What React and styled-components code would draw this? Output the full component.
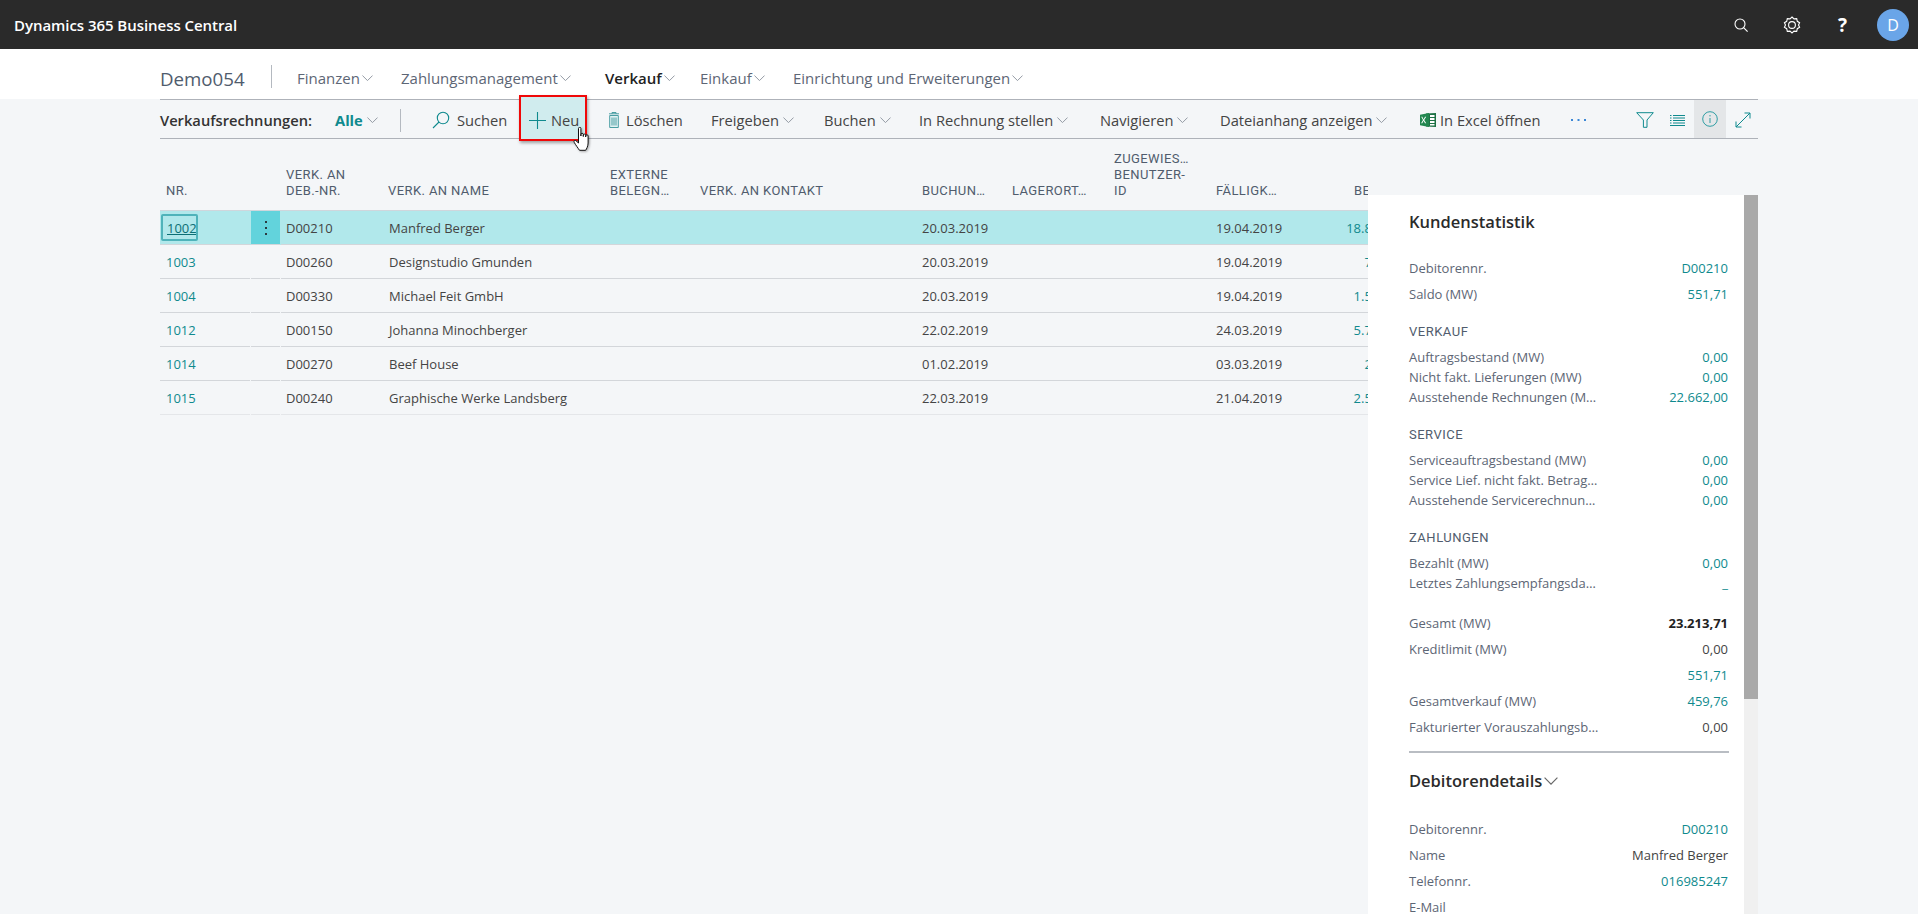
import React from 'react';
import styled, { createGlobalStyle } from 'styled-components';

const Global = createGlobalStyle`
  html, body { margin: 0; padding: 0; height: 914px; overflow: hidden; background: #f4f6f8; }
  * { box-sizing: border-box; }
  body { font-family: "Open Sans", "Noto Sans", "Liberation Sans", sans-serif; color: #333; }
`;

const TEAL = '#0f8a8e';
const Page = styled.div`position: relative; width: 1918px; height: 914px; overflow: hidden;`;

const TopBar = styled.header`
  height: 49px; background: #2a2a2a; display: flex; align-items: center; justify-content: space-between;
  padding: 0 9px 0 14px; color: #fff;
`;
const Brand = styled.div`font-size: 15px; font-weight: 600; letter-spacing: -0.05px; white-space: nowrap;`;
const TopActions = styled.div`display: flex; align-items: center;`;
const TopIcon = styled.div`width: 51px; display: flex; justify-content: center; align-items: center; font-size: 19px; font-weight: 700;`;
const Avatar = styled.div`
  width: 32px; height: 32px; border-radius: 50%; background: #6aa5e8; color: #fff; margin-left: 9px;
  display: flex; align-items: center; justify-content: center; font-size: 16px;
`;

const NavBand = styled.nav`height: 50px; background: #fff; padding: 5px 0 0 160px; display: flex; align-items: center;`;
const Company = styled.div`font-size: 18.7px; color: #505c6d; width: 112px; height: 23px; line-height: 28px; border-right: 1px solid #b4b9c0; white-space: nowrap;`;
const NavList = styled.div`display: flex; margin: 3px 0 0 25px;`;
const NavItem = styled.div`
  width: ${p => p.$w}px; display: flex; align-items: center; gap: 2px; font-size: 15px; white-space: nowrap;
  color: ${p => (p.$active ? '#222' : '#5d6675')}; font-weight: ${p => (p.$active ? 600 : 400)};
`;

const Toolbar = styled.div`
  position: relative; margin-left: 160px; width: 1598px; height: 40px; display: flex; align-items: center; padding-top: 2px;
  border-top: 1px solid #aeb2b9; border-bottom: 1px solid #aeb2b9; font-size: 14.7px; color: #444;
`;
const PageName = styled.div`width: 175px; flex: none; font-weight: 600; color: #333; white-space: nowrap;`;
const ViewName = styled.div`width: 65px; flex: none; display: flex; align-items: center; gap: 4px; color: ${TEAL}; font-weight: 700;`;
const VLine = styled.div`width: 1px; flex: none; height: 23px; background: #b4b9c0; margin-right: 31px;`;
const Tool = styled.div`
  width: ${p => p.$w}px; flex: none; display: flex; align-items: center; gap: ${p => p.$gap ?? 6}px; white-space: nowrap;
  padding-left: ${p => p.$pl || 0}px;
`;
const NewButton = styled.div`
  position: relative; height: 46px; width: 68px; margin: -4px 21px 0 0; padding: 4px 0 0 8px;
  display: flex; align-items: center; gap: 5px; background: #d0ecee;
  border: 2px solid #f00808; box-shadow: 1px 2px 3px rgba(0,0,0,.35); z-index: 2; flex: none;
`;
const IconSlot = styled.div`
  width: ${p => p.$w}px; flex: none; height: 38px; margin-top: -2px; display: flex; align-items: center; justify-content: center; background: ${p => p.$bg || 'transparent'};
`;
const Cursor = styled.svg`position: absolute; left: 52px; top: 30px; z-index: 3; filter: drop-shadow(1px 1px 1px rgba(0,0,0,.3));`;

const Table = styled.div`margin-left: 160px; width: 1208px; overflow: hidden;`;
const cols = '91px 30px 101px 222px 90px 222px 90px 102px 102px 100px 102px';
const HeadRow = styled.div`
  display: grid; grid-template-columns: ${cols}; align-items: end; height: 72px; padding-bottom: 11px;
  border-bottom: 1px solid #cfd6dc;
`;
const Head = styled.div`
  padding-left: ${p => p.$pl ?? 6}px; padding-right: ${p => (p.$right ? 7 : 0)}px;
  font: 400 13px/16px Roboto, "Liberation Sans", sans-serif; color: #505c6d; white-space: pre-line;
  letter-spacing: .4px; text-align: ${p => (p.$right ? 'right' : 'left')};
`;
const Row = styled.div`
  display: grid; grid-template-columns: ${cols}; height: 34px; align-items: stretch;
  background: ${p => (p.$selected ? '#b1e8eb' : 'transparent')}; font-size: 13px;
`;
const Cell = styled.div`
  display: flex; align-items: center; padding-left: ${p => p.$pl ?? 6}px; white-space: nowrap; color: #444;
  border-bottom: 1px solid ${p => (p.$last ? '#e4e6e9' : '#d3d6da')};
  ${p => p.$gap && 'margin-right: 1px;'}
  ${p => p.$right && `justify-content: flex-end; padding-right: 7px; color: ${TEAL};`}
`;
const FocusLink = styled.a`
  color: #0c6f75; text-decoration: underline; border: 2px solid #4fb3ba; border-radius: 2px;
  height: 27px; line-height: 24px; width: 37px; margin-left: -5px; padding-left: 4px; white-space: nowrap; overflow: hidden;
`;
const Link = styled.a`color: ${TEAL};`;
const MenuCell = styled.div`
  display: flex; align-items: center; justify-content: center; background: ${p => (p.$on ? '#62d3dc' : 'transparent')};
  border-bottom: 1px solid ${p => (p.$last ? '#e4e6e9' : '#d3d6da')}; margin-right: 1px;
`;

const Panel = styled.aside`
  position: absolute; left: 1368px; top: 195px; width: 390px; height: 719px; display: flex; background: #fff; z-index: 1;
`;
const PanelBody = styled.div`width: 376px; padding: 0 16px 0 41px; font-size: 13px; line-height: 14px; color: #5d6675;`;
const Scrollbar = styled.div`width: 14px; background: #f0f0f0;`;
const Thumb = styled.div`height: 504px; background: #a9a9a9;`;
const PanelTitle = styled.div`
  font-size: 16.5px; font-weight: 600; color: #2b2b2b; line-height: 26px; margin-top: ${p => p.$mt}px;
  display: flex; align-items: center; gap: 2px;
`;
const Section = styled.div`
  font: 400 13px/20px Roboto, "Liberation Sans", sans-serif; letter-spacing: .5px; color: #505c6d; margin-top: ${p => p.$mt}px; margin-bottom: 5px;
`;
const Field = styled.div`
  display: flex; justify-content: space-between; align-items: center; white-space: nowrap;
  height: ${p => (p.$compact ? 20 : 26)}px; margin-top: ${p => p.$mt || 0}px;
`;
const Value = styled.span`
  color: ${p => (p.$plain ? '#444' : p.$bold ? '#222' : TEAL)}; font-weight: ${p => (p.$bold ? 700 : 400)};
`;
const Rule = styled.div`height: 2px; background: #b9bdc3; margin-top: 11px; width: 320px;`;

const Chevron = ({ c = '#8a929c', s = 11 }) => (
  <svg width={s} height={s * 0.6} viewBox="0 0 12 7" fill="none" stroke={c} strokeWidth="1"><path d="M.5.5 6 6l5.5-5.5" /></svg>
);

const rows = [
  ['1002', 'D00210', 'Manfred Berger', '20.03.2019', '19.04.2019', '18.811,53'],
  ['1003', 'D00260', 'Designstudio Gmunden', '20.03.2019', '19.04.2019', '738,00'],
  ['1004', 'D00330', 'Michael Feit GmbH', '20.03.2019', '19.04.2019', '1.573,20'],
  ['1012', 'D00150', 'Johanna Minochberger', '22.02.2019', '24.03.2019', '5.763,78'],
  ['1014', 'D00270', 'Beef House', '01.02.2019', '03.03.2019', '244,00'],
  ['1015', 'D00240', 'Graphische Werke Landsberg', '22.03.2019', '21.04.2019', '2.565,00'],
];

export default function App() {
  return (
    <Page>
      <Global />
      <TopBar>
        <Brand>Dynamics 365 Business Central</Brand>
        <TopActions>
          <TopIcon>
            <svg width="14" height="14" viewBox="0 0 14 14" fill="none" stroke="#fff" strokeWidth="1.1"><circle cx="6" cy="6" r="5" /><path d="m9.6 9.6 4 4" /></svg>
          </TopIcon>
          <TopIcon>
            <svg width="18" height="18" viewBox="0 0 18 18" fill="none" stroke="#fff" strokeWidth="1.1"><path d="M9 1l2 1.9 2.7-.3.6 2.7 2.3 1.4L15.500 9l1.100 2.300-2.300 1.400-.6 2.700-2.700-.3L9 17l-2-1.900-2.700.3-.6-2.700-2.300-1.400L2.500 9 1.400 6.700l2.300-1.400.6-2.700 2.700.3z" /><circle cx="9" cy="9" r="3.400" /></svg>
          </TopIcon>
          <TopIcon>?</TopIcon>
          <Avatar>D</Avatar>
        </TopActions>
      </TopBar>

      <NavBand>
        <Company>Demo054</Company>
        <NavList>
          <NavItem $w={104}>Finanzen<Chevron /></NavItem>
          <NavItem $w={204}>Zahlungsmanagement<Chevron /></NavItem>
          <NavItem $w={95} $active>Verkauf<Chevron /></NavItem>
          <NavItem $w={93}>Einkauf<Chevron /></NavItem>
          <NavItem $w={240}>Einrichtung und Erweiterungen<Chevron /></NavItem>
        </NavList>
      </NavBand>

      <Toolbar>
        <PageName>Verkaufsrechnungen:</PageName>
        <ViewName>Alle<Chevron /></ViewName>
        <VLine />
        <Tool $w={87} $gap={7}>
          <svg width="18" height="18" viewBox="0 0 18 18" fill="none" stroke={TEAL} strokeWidth="1.1"><circle cx="11" cy="7" r="5.700" /><path d="M7 11 1 17" /></svg>
          Suchen
        </Tool>
        <NewButton>
          <svg width="17" height="17" viewBox="0 0 17 17" fill="none" stroke={TEAL} strokeWidth="1.100"><path d="M8.500 0v17M0 8.500h17" /></svg>
          Neu
          <Cursor width="18" height="24" viewBox="0 0 18 24" fill="#fff" stroke="#111" strokeWidth="1" strokeLinejoin="round">
            <path d="M5.500 1.500a1.200 1.200 0 0 1 2.400 0V9 7.500a1.200 1.200 0 0 1 2.400 0v2-1.200a1.200 1.200 0 0 1 2.400 0V10 9a1.200 1.200 0 0 1 2.400 0v7c0 3-1.500 6-2.500 7.300H6.500C5 21 3 18.500 1.200 15.300c-.7-1.300.5-2.500 1.600-1.700L5.500 16z" />
          </Cursor>
        </NewButton>
        <Tool $w={103}>
          <svg width="12" height="16" viewBox="0 0 12 16" fill="#e2f2f3" stroke="#4a9ea3" strokeWidth="1"><path d="M1 1.800h10M4 1.800V.5h4v1.300M1.700 3.500h8.600v12H1.700zM4 5.500v8M6 5.500v8M8 5.500v8" /></svg>
          Löschen
        </Tool>
        <Tool $w={113} $gap={4}>Freigeben<Chevron /></Tool>
        <Tool $w={95} $gap={4}>Buchen<Chevron /></Tool>
        <Tool $w={181} $gap={4}>In Rechnung stellen<Chevron /></Tool>
        <Tool $w={120} $gap={4}>Navigieren<Chevron /></Tool>
        <Tool $w={200} $gap={4}>Dateianhang anzeigen<Chevron /></Tool>
        <Tool $w={151} $gap={4}>
          <svg width="16" height="16" viewBox="0 0 16 16"><path d="M6 1.600 16 .9v14.200L6 14.400z" fill="#1d7144" /><path d="M0 2.800 9 1v14l-9-1.800z" fill="#21864f" /><path d="M10 3h4.500v2H10zM10 6h4.500v2H10zM10 9h4.500v2H10zM10 12h4.500v1.600H10z" fill="#fff" /><path d="m2.300 4.800 1.300 2.600 1.400-2.600h1.200L4.200 8l2 3.200H5L3.600 8.700l-1.300 2.500H1.100L3 8 1.200 4.800z" fill="#fff" /></svg>
          In Excel öffnen
        </Tool>
        <Tool $w={65}>
          <svg width="15" height="2" viewBox="0 0 15 2" fill="#3b87d6"><path d="M0 0h2v2H0zM6.500 0h2v2h-2zM13 0h2v2h-2z" /></svg>
        </Tool>
        <Tool $w={34}>
          <svg width="18" height="16" viewBox="0 0 18 16" fill="none" stroke={TEAL} strokeWidth="1"><path d="M.7.7h16.600L11 8v7.300H7.400V8z" /></svg>
        </Tool>
        <Tool $w={24}>
          <svg width="15" height="11" viewBox="0 0 15 11" fill="none" stroke={TEAL} strokeWidth="1"><path d="M0 .5h1.500M3 .5h12M0 3h1.500M3 3h12M0 5.500h1.500M3 5.500h12M0 8h1.500M3 8h12M0 10.500h15" /></svg>
        </Tool>
        <IconSlot $w={32} $bg="#e4e6e8">
          <svg width="16" height="16" viewBox="0 0 16 16" fill="none" stroke="#2f9da3" strokeWidth="1"><circle cx="8" cy="8" r="7.300" /><path d="M8 7v5M8 4v1.400" /></svg>
        </IconSlot>
        <Tool $w={32} $pl={9}>
          <svg width="16" height="16" viewBox="0 0 16 16" fill="none" stroke={TEAL} strokeWidth="1"><path d="M1 15 15 1M9.500 1H15v5.500M1 9.500V15h5.500" /></svg>
        </Tool>
      </Toolbar>

      <Table>
        <HeadRow>
          <Head>NR.</Head>
          <span />
          <Head $pl={5}>{'VERK. AN\nDEB.-NR.'}</Head>
          <Head>VERK. AN NAME</Head>
          <Head>{'EXTERNE\nBELEGN…'}</Head>
          <Head>VERK. AN KONTAKT</Head>
          <Head>BUCHUN…</Head>
          <Head>LAGERORT…</Head>
          <Head>{'ZUGEWIES…\nBENUTZER-\nID'}</Head>
          <Head>FÄLLIGK…</Head>
          <Head $right>BETRAG</Head>
        </HeadRow>
        {rows.map((r, i) => {
          const last = i === rows.length - 1;
          return (
            <Row key={r[0]} $selected={i === 0}>
              <Cell $gap $last={last}>{i === 0 ? <FocusLink>{r[0]}</FocusLink> : <Link>{r[0]}</Link>}</Cell>
              <MenuCell $on={i === 0} $last={last}>
                {i === 0 && (
                  <svg width="2" height="14" viewBox="0 0 2 14" fill="#2b3a40"><path d="M0 0h2v2H0zM0 6h2v2H0zM0 12h2v2H0z" /></svg>
                )}
              </MenuCell>
              <Cell $pl={5} $last={last}>{r[1]}</Cell>
              <Cell $pl={7} $last={last}>{r[2]}</Cell>
              <Cell $last={last} />
              <Cell $last={last} />
              <Cell $last={last}>{r[3]}</Cell>
              <Cell $last={last} />
              <Cell $last={last} />
              <Cell $last={last}>{r[4]}</Cell>
              <Cell $last={last} $right>{r[5]}</Cell>
            </Row>
          );
        })}
      </Table>

      <Panel>
        <PanelBody>
          <PanelTitle $mt={14}>Kundenstatistik</PanelTitle>
          <Field $mt={20}><span>Debitorennr.</span><Value>D00210</Value></Field>
          <Field><span>Saldo (MW)</span><Value>551,71</Value></Field>
          <Section $mt={15}>VERKAUF</Section>
          <Field $compact><span>Auftragsbestand (MW)</span><Value>0,00</Value></Field>
          <Field $compact><span>Nicht fakt. Lieferungen (MW)</span><Value>0,00</Value></Field>
          <Field $compact><span>Ausstehende Rechnungen (M…</span><Value>22.662,00</Value></Field>
          <Section $mt={18}>SERVICE</Section>
          <Field $compact><span>Serviceauftragsbestand (MW)</span><Value>0,00</Value></Field>
          <Field $compact><span>Service Lief. nicht fakt. Betrag…</span><Value>0,00</Value></Field>
          <Field $compact><span>Ausstehende Servicerechnun…</span><Value>0,00</Value></Field>
          <Section $mt={18}>ZAHLUNGEN</Section>
          <Field $compact><span>Bezahlt (MW)</span><Value>0,00</Value></Field>
          <Field $compact><span>Letztes Zahlungsempfangsda…</span><Value>_</Value></Field>
          <Field $mt={17}><span>Gesamt (MW)</span><Value $bold>23.213,71</Value></Field>
          <Field><span>Kreditlimit (MW)</span><Value $plain>0,00</Value></Field>
          <Field><span /><Value>551,71</Value></Field>
          <Field><span>Gesamtverkauf (MW)</span><Value>459,76</Value></Field>
          <Field><span>Fakturierter Vorauszahlungsb…</span><Value $plain>0,00</Value></Field>
          <Rule />
          <PanelTitle $mt={15}>Debitorendetails<Chevron s={14} c="#666" /></PanelTitle>
          <Field $mt={22}><span>Debitorennr.</span><Value>D00210</Value></Field>
          <Field><span>Name</span><Value $plain>Manfred Berger</Value></Field>
          <Field><span>Telefonnr.</span><Value>016985247</Value></Field>
          <Field><span>E-Mail</span></Field>
        </PanelBody>
        <Scrollbar><Thumb /></Scrollbar>
      </Panel>
    </Page>
  );
}
